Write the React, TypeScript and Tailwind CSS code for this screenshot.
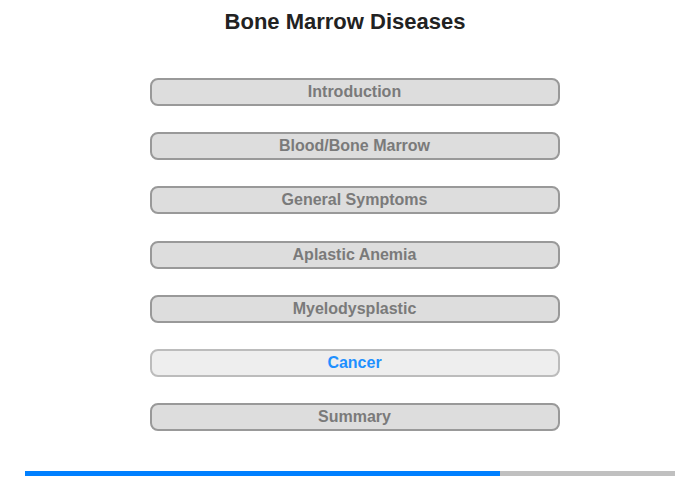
const items = [
  'Introduction',
  'Blood/Bone Marrow',
  'General Symptoms',
  'Aplastic Anemia',
  'Myelodysplastic',
  'Cancer',
  'Summary',
]

export default function App() {
  return (
    <div className="w-[700px] h-[480px] bg-white flex flex-col font-['Liberation_Sans',Arial,sans-serif]">
      <h1 className="text-center text-[22px] font-bold text-[#222] pt-[9px] pr-[10px] leading-[26px]">Bone Marrow Diseases</h1>
      <div className="flex flex-col items-center gap-[26.2px] mt-[43px] pl-[9px]">
        {items.map((name) => {
          const active = name === 'Cancer'
          return (
            <button
              key={name}
              className={
                active
                  ? 'w-[410px] h-[28px] rounded-[8px] border-2 border-[#bcbcbc] bg-[#eeeeee] text-[#1e90ff] text-[16px] font-bold leading-none'
                  : 'w-[410px] h-[28px] rounded-[8px] border-2 border-[#999999] bg-[#dddddd] text-[#7a7a7a] text-[16px] font-bold leading-none'
              }
            >
              {name}
            </button>
          )
        })}
      </div>
      <div className="mt-[40px] mx-[25px] h-[5px] flex bg-[#c0c0c0]">
        <div className="w-[73%] bg-[#0080ff]" />
      </div>
    </div>
  )
}
